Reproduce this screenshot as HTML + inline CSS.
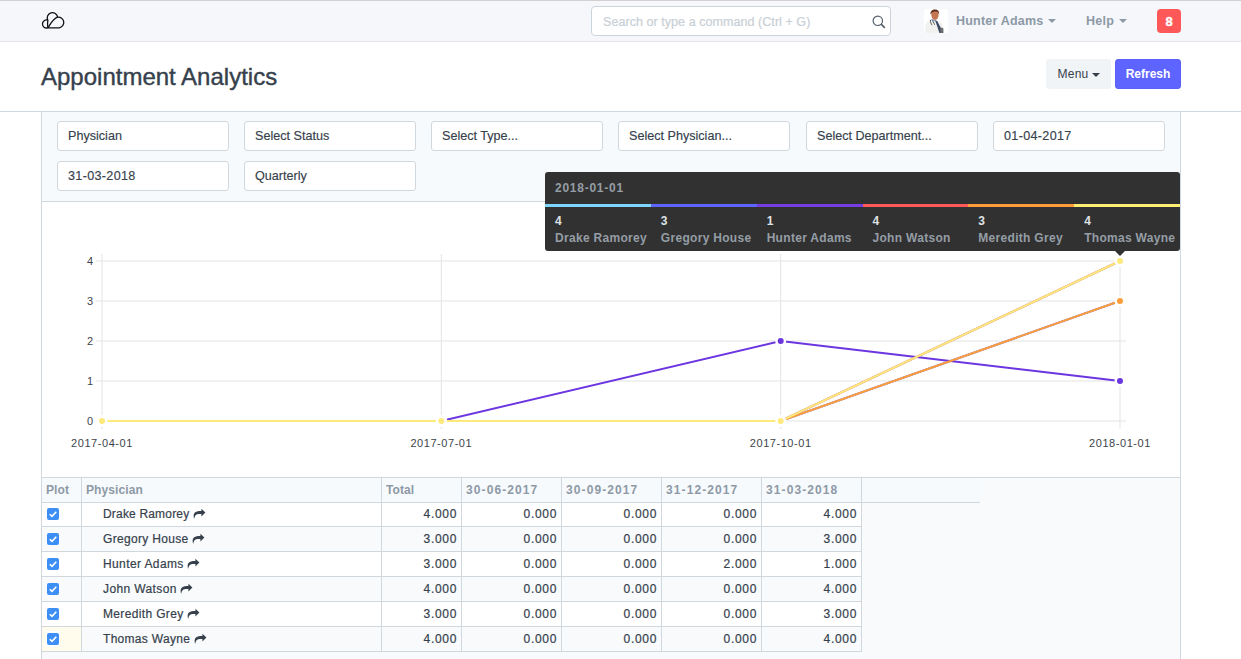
<!DOCTYPE html>
<html><head><meta charset="utf-8">
<style>
*{box-sizing:border-box;margin:0;padding:0}
html,body{width:1241px;height:659px;overflow:hidden;background:#fff;font-family:"Liberation Sans",sans-serif;color:#36414c;position:relative}
.abs{position:absolute}
.t{position:absolute;white-space:nowrap;line-height:1}
#nav{left:0;top:0;width:1241px;height:42px;background:#f5f7fa;border-top:1px solid #d1d1d1;border-bottom:1px solid #e1e5ea}
#search{left:591px;top:5px;width:300px;height:30px;background:#fff;border:1px solid #cdd5dc;border-radius:4px}
.navtxt{font-weight:bold;font-size:12.5px;color:#8d99a6}
.caret{position:absolute;width:0;height:0;border-left:4px solid transparent;border-right:4px solid transparent;border-top:4px solid #8d99a6}
#badge{left:1157px;top:9px;width:24px;height:24px;background:#ff5858;border-radius:4px;color:#fff;font-weight:bold;font-size:13px;text-align:center;line-height:25px;-webkit-text-stroke:0.4px #fff}
#head{left:0;top:42px;width:1241px;height:70px;background:#fff;border-bottom:1px solid #d1d8dd}
.btn{position:absolute;top:59px;height:30px;border-radius:3px;font-size:12px;line-height:30px;text-align:center}
#main{left:41px;top:112px;width:1140px;height:560px;border-left:1px solid #d1d8dd;border-right:1px solid #d1d8dd;background:#fff}
#form{left:42px;top:112px;width:1138px;height:90px;background:#f7fafc;border-bottom:1px solid #d1d8dd}
.inp{position:absolute;width:172px;height:30px;background:#fff;border:1px solid #d1d8dd;border-radius:3px;font-size:12.6px;padding-left:10px;line-height:28px;color:#36414c;-webkit-text-stroke:0.15px #36414c}
.dt{letter-spacing:0.32px}
#tablebg{left:42px;top:477px;width:1138px;height:190px;background:#f9fafc;border-top:1px solid #d1d8dd}
#tip{left:545px;top:172px;width:635px;height:79px;background:#313131;border-radius:3px;color:#959da5;font-weight:bold;font-size:12px;letter-spacing:0.3px}
.th{font-weight:bold;font-size:12px;color:#8d99a6;letter-spacing:0.1px}
.td{font-size:12px;color:#36414c;letter-spacing:0.18px;-webkit-text-stroke:0.2px #36414c}
.num{letter-spacing:0.7px}
.cb{position:absolute;width:12px;height:12px;background:#3d8ff5;border-radius:2px;line-height:0}
.share{vertical-align:-1.4px;margin-left:-0.3px}
</style></head><body>
<div id="nav" class="abs">
  <svg class="abs" style="left:38px;top:8px" width="30" height="24" viewBox="38 8 30 24">
    <g fill="none" stroke="#111" stroke-width="1.3" stroke-linejoin="round">
      <path d="M47.6 26.8 L59.2 26.8 A5.2 5.2 0 1 0 57.6 16.2 A5.2 5.2 0 1 0 47.8 19.2 A4 4 0 1 0 47.6 26.8 Z"/>
      <path d="M47.8 19.2 C47.4 22 47.5 24.8 47.9 26.8"/>
      <path d="M47.9 26.8 C50.5 22.8 53.2 17.6 57.6 16.2"/>
    </g>
  </svg>
  <div id="search" class="abs"><span class="t" style="left:11px;top:9px;font-size:12.5px;color:#c8cfd6;letter-spacing:0.06px;-webkit-text-stroke:0.2px #c8cfd6">Search or type a command (Ctrl + G)</span>
    <svg class="abs" style="left:280px;top:8px" width="14" height="15" viewBox="0 0 14 15"><circle cx="5.8" cy="5.8" r="4.7" fill="none" stroke="#56616c" stroke-width="1.2"/><path d="M9.2 9.2 L12.8 12.9" stroke="#56616c" stroke-width="1.7"/></svg>
  </div>
  <div class="abs" style="left:924px;top:8px;width:24px;height:24px;background:#fff;border-radius:3px;overflow:hidden">
    <svg width="24" height="24" viewBox="0 0 24 24">
      <path d="M1 25 L1.5 16 C2.5 12.5 5 11 7.5 10.2 L12 11 C15 12 17.5 13.5 18.8 16 L19.5 25 Z" fill="#f1f1ef"/>
      <path d="M7 10 L11.5 10.5 L12.5 12.5 L8 12 Z" fill="#8fa6c8"/>
      <path d="M11.2 11.5 L13.2 12 L18 21 L18.5 25 L15.8 25 Z" fill="#3f4a66"/>
      <path d="M16 18.5 L19.3 19 L19.5 25 L16.5 25 Z" fill="#6a6d70"/>
      <path d="M7.2 4.2 C7.2 8.5 8.8 10.8 11 10.8 C13.3 10.8 14.6 8.5 14.6 5 C14.6 2.5 13 1.5 11 1.5 C8.8 1.5 7.2 2.3 7.2 4.2 Z" fill="#c47650"/>
      <path d="M6.4 5.5 C6.2 2 8.2 0.4 11 0.4 C14 0.4 15.4 2.2 15.2 5.8 C14.8 4.5 14 3 13 2.6 C11 2.3 9 2.5 7.8 3.6 C7.2 4.2 6.9 5 6.4 5.5 Z" fill="#5b2c18"/>
      <path d="M6.5 10.8 C6.2 13 7.2 15 8 16.2 M8.5 11.5 C9.5 13.5 10.5 15 10.6 15.8" fill="none" stroke="#4a4a4a" stroke-width="0.9"/>
    </svg>
  </div>
  <span class="t navtxt" style="left:956px;top:14px;letter-spacing:0.2px">Hunter Adams</span>
  <div class="caret" style="left:1048px;top:18px"></div>
  <span class="t navtxt" style="left:1086px;top:14px;letter-spacing:0.3px">Help</span>
  <div class="caret" style="left:1119px;top:18px"></div>
  <div id="badge" class="abs" style="top:8px">8</div>
</div>

<div id="head" class="abs">
  <span class="t" style="left:41px;top:23px;font-size:24px;color:#36414c;-webkit-text-stroke:0.4px #36414c">Appointment Analytics</span>
</div>
<div class="btn" style="left:1046px;width:65px;background:#f0f4f7;color:#36414c"><span style="position:relative;left:-5.5px;letter-spacing:0.2px">Menu</span><div class="caret" style="left:46px;top:14px;border-top-color:#36414c"></div></div>
<div class="btn" style="left:1115px;width:66px;background:#5e64ff;color:#fff;font-weight:bold;border:1px solid #5a60f5;line-height:28px">Refresh</div>

<div id="main" class="abs"></div>
<div id="form" class="abs"></div>
<div class="inp" style="left:57px;top:121px">Physician</div>
<div class="inp" style="left:244px;top:121px">Select Status</div>
<div class="inp" style="left:431px;top:121px">Select Type...</div>
<div class="inp" style="left:618px;top:121px">Select Physician...</div>
<div class="inp" style="left:806px;top:121px">Select Department...</div>
<div class="inp dt" style="left:993px;top:121px">01-04-2017</div>
<div class="inp dt" style="left:57px;top:161px">31-03-2018</div>
<div class="inp" style="left:244px;top:161px">Quarterly</div>

<div id="tablebg" class="abs"></div>

<div id="tbl">
<div class="abs" style="left:42px;top:478px;width:938px;height:24px;background:#f7fafc"></div>
<div class="abs" style="left:42px;top:503px;width:819px;height:23px;background:#fff"></div>
<div class="abs" style="left:42px;top:527px;width:819px;height:24px;background:#f8fafc"></div>
<div class="abs" style="left:42px;top:552px;width:819px;height:24px;background:#fff"></div>
<div class="abs" style="left:42px;top:577px;width:819px;height:24px;background:#f8fafc"></div>
<div class="abs" style="left:42px;top:602px;width:819px;height:24px;background:#fff"></div>
<div class="abs" style="left:42px;top:627px;width:819px;height:24px;background:#f8fafc"></div>
<div class="abs" style="left:42px;top:627px;width:39px;height:24px;background:#fffcee"></div>
<div class="abs" style="left:46px;top:631px;width:14px;height:16px;background:#fff"></div>
<div class="abs" style="left:41px;top:502px;width:939px;height:1px;background:#d1d8dd"></div>
<div class="abs" style="left:41px;top:526px;width:820px;height:1px;background:#d1d8dd"></div>
<div class="abs" style="left:41px;top:551px;width:820px;height:1px;background:#d1d8dd"></div>
<div class="abs" style="left:41px;top:576px;width:820px;height:1px;background:#d1d8dd"></div>
<div class="abs" style="left:41px;top:601px;width:820px;height:1px;background:#d1d8dd"></div>
<div class="abs" style="left:41px;top:626px;width:820px;height:1px;background:#d1d8dd"></div>
<div class="abs" style="left:41px;top:651px;width:820px;height:1px;background:#d1d8dd"></div>
<div class="abs" style="left:81px;top:478px;width:1px;height:174px;background:#d1d8dd"></div>
<div class="abs" style="left:381px;top:478px;width:1px;height:174px;background:#d1d8dd"></div>
<div class="abs" style="left:461px;top:478px;width:1px;height:174px;background:#d1d8dd"></div>
<div class="abs" style="left:561px;top:478px;width:1px;height:174px;background:#d1d8dd"></div>
<div class="abs" style="left:661px;top:478px;width:1px;height:174px;background:#d1d8dd"></div>
<div class="abs" style="left:761px;top:478px;width:1px;height:174px;background:#d1d8dd"></div>
<div class="abs" style="left:861px;top:478px;width:1px;height:174px;background:#d1d8dd"></div>
<span class="t th" style="left:46px;top:484px">Plot</span>
<span class="t th" style="left:86px;top:484px">Physician</span>
<span class="t th" style="left:386px;top:484px">Total</span>
<span class="t th" style="left:466px;top:484px;letter-spacing:1.1px">30-06-2017</span>
<span class="t th" style="left:566px;top:484px;letter-spacing:1.1px">30-09-2017</span>
<span class="t th" style="left:666px;top:484px;letter-spacing:1.1px">31-12-2017</span>
<span class="t th" style="left:766px;top:484px;letter-spacing:1.1px">31-03-2018</span>
<div class="cb" style="left:47px;top:508px"><svg width="12" height="12" viewBox="0 0 12 12"><path d="M2.8 6.2 L5 8.4 L9.3 3.8" fill="none" stroke="#fff" stroke-width="1.6"/></svg></div>
<span class="t td" style="left:103px;top:508px;letter-spacing:0.18px">Drake Ramorey <svg class="share" width="13" height="11" viewBox="-0.5 -1 13 11"><path d="M11.9 3.6 L7.9 -0.3 L7.9 1.9 C4.5 1.9 1.8 2.4 0.6 4.6 C-0.1 6 0.1 8.3 0.6 10 C1.2 7.5 2 5.3 4.8 5.1 L7.9 5.1 L7.9 7.6 Z" fill="#36414c"/></svg></span>
<span class="t td num" style="right:783.9000000000001px;top:508px">4.000</span>
<span class="t td num" style="right:683.9px;top:508px">0.000</span>
<span class="t td num" style="right:583.9px;top:508px">0.000</span>
<span class="t td num" style="right:483.9px;top:508px">0.000</span>
<span class="t td num" style="right:383.9px;top:508px">4.000</span>
<div class="cb" style="left:47px;top:533px"><svg width="12" height="12" viewBox="0 0 12 12"><path d="M2.8 6.2 L5 8.4 L9.3 3.8" fill="none" stroke="#fff" stroke-width="1.6"/></svg></div>
<span class="t td" style="left:103px;top:533px;letter-spacing:0.32px">Gregory House <svg class="share" width="13" height="11" viewBox="-0.5 -1 13 11"><path d="M11.9 3.6 L7.9 -0.3 L7.9 1.9 C4.5 1.9 1.8 2.4 0.6 4.6 C-0.1 6 0.1 8.3 0.6 10 C1.2 7.5 2 5.3 4.8 5.1 L7.9 5.1 L7.9 7.6 Z" fill="#36414c"/></svg></span>
<span class="t td num" style="right:783.9000000000001px;top:533px">3.000</span>
<span class="t td num" style="right:683.9px;top:533px">0.000</span>
<span class="t td num" style="right:583.9px;top:533px">0.000</span>
<span class="t td num" style="right:483.9px;top:533px">0.000</span>
<span class="t td num" style="right:383.9px;top:533px">3.000</span>
<div class="cb" style="left:47px;top:558px"><svg width="12" height="12" viewBox="0 0 12 12"><path d="M2.8 6.2 L5 8.4 L9.3 3.8" fill="none" stroke="#fff" stroke-width="1.6"/></svg></div>
<span class="t td" style="left:103px;top:558px;letter-spacing:0.39px">Hunter Adams <svg class="share" width="13" height="11" viewBox="-0.5 -1 13 11"><path d="M11.9 3.6 L7.9 -0.3 L7.9 1.9 C4.5 1.9 1.8 2.4 0.6 4.6 C-0.1 6 0.1 8.3 0.6 10 C1.2 7.5 2 5.3 4.8 5.1 L7.9 5.1 L7.9 7.6 Z" fill="#36414c"/></svg></span>
<span class="t td num" style="right:783.9000000000001px;top:558px">3.000</span>
<span class="t td num" style="right:683.9px;top:558px">0.000</span>
<span class="t td num" style="right:583.9px;top:558px">0.000</span>
<span class="t td num" style="right:483.9px;top:558px">2.000</span>
<span class="t td num" style="right:383.9px;top:558px">1.000</span>
<div class="cb" style="left:47px;top:583px"><svg width="12" height="12" viewBox="0 0 12 12"><path d="M2.8 6.2 L5 8.4 L9.3 3.8" fill="none" stroke="#fff" stroke-width="1.6"/></svg></div>
<span class="t td" style="left:103px;top:583px;letter-spacing:0.38px">John Watson <svg class="share" width="13" height="11" viewBox="-0.5 -1 13 11"><path d="M11.9 3.6 L7.9 -0.3 L7.9 1.9 C4.5 1.9 1.8 2.4 0.6 4.6 C-0.1 6 0.1 8.3 0.6 10 C1.2 7.5 2 5.3 4.8 5.1 L7.9 5.1 L7.9 7.6 Z" fill="#36414c"/></svg></span>
<span class="t td num" style="right:783.9000000000001px;top:583px">4.000</span>
<span class="t td num" style="right:683.9px;top:583px">0.000</span>
<span class="t td num" style="right:583.9px;top:583px">0.000</span>
<span class="t td num" style="right:483.9px;top:583px">0.000</span>
<span class="t td num" style="right:383.9px;top:583px">4.000</span>
<div class="cb" style="left:47px;top:608px"><svg width="12" height="12" viewBox="0 0 12 12"><path d="M2.8 6.2 L5 8.4 L9.3 3.8" fill="none" stroke="#fff" stroke-width="1.6"/></svg></div>
<span class="t td" style="left:103px;top:608px;letter-spacing:0.35px">Meredith Grey <svg class="share" width="13" height="11" viewBox="-0.5 -1 13 11"><path d="M11.9 3.6 L7.9 -0.3 L7.9 1.9 C4.5 1.9 1.8 2.4 0.6 4.6 C-0.1 6 0.1 8.3 0.6 10 C1.2 7.5 2 5.3 4.8 5.1 L7.9 5.1 L7.9 7.6 Z" fill="#36414c"/></svg></span>
<span class="t td num" style="right:783.9000000000001px;top:608px">3.000</span>
<span class="t td num" style="right:683.9px;top:608px">0.000</span>
<span class="t td num" style="right:583.9px;top:608px">0.000</span>
<span class="t td num" style="right:483.9px;top:608px">0.000</span>
<span class="t td num" style="right:383.9px;top:608px">3.000</span>
<div class="cb" style="left:47px;top:633px"><svg width="12" height="12" viewBox="0 0 12 12"><path d="M2.8 6.2 L5 8.4 L9.3 3.8" fill="none" stroke="#fff" stroke-width="1.6"/></svg></div>
<span class="t td" style="left:103px;top:633px;letter-spacing:0.3px">Thomas Wayne <svg class="share" width="13" height="11" viewBox="-0.5 -1 13 11"><path d="M11.9 3.6 L7.9 -0.3 L7.9 1.9 C4.5 1.9 1.8 2.4 0.6 4.6 C-0.1 6 0.1 8.3 0.6 10 C1.2 7.5 2 5.3 4.8 5.1 L7.9 5.1 L7.9 7.6 Z" fill="#36414c"/></svg></span>
<span class="t td num" style="right:783.9000000000001px;top:633px">4.000</span>
<span class="t td num" style="right:683.9px;top:633px">0.000</span>
<span class="t td num" style="right:583.9px;top:633px">0.000</span>
<span class="t td num" style="right:483.9px;top:633px">0.000</span>
<span class="t td num" style="right:383.9px;top:633px">4.000</span>
</div>
<!-- chart -->
<svg class="abs" style="left:0;top:0" width="1241" height="659">
<line x1="96" y1="421" x2="1126" y2="421" stroke="#e3e3e3" stroke-width="1"/>
<line x1="96" y1="381" x2="1126" y2="381" stroke="#e3e3e3" stroke-width="1"/>
<line x1="96" y1="341" x2="1126" y2="341" stroke="#e3e3e3" stroke-width="1"/>
<line x1="96" y1="301" x2="1126" y2="301" stroke="#e3e3e3" stroke-width="1"/>
<line x1="96" y1="261" x2="1126" y2="261" stroke="#e3e3e3" stroke-width="1"/>
<line x1="102" y1="254" x2="102" y2="429" stroke="#e3e3e3" stroke-width="1"/>
<line x1="441.3" y1="254" x2="441.3" y2="429" stroke="#e3e3e3" stroke-width="1"/>
<line x1="780.7" y1="254" x2="780.7" y2="429" stroke="#e3e3e3" stroke-width="1"/>
<line x1="1120" y1="254" x2="1120" y2="429" stroke="#e3e3e3" stroke-width="1"/>
<text x="93" y="425" text-anchor="end" font-size="11" fill="#40454b">0</text>
<text x="93" y="385" text-anchor="end" font-size="11" fill="#40454b">1</text>
<text x="93" y="345" text-anchor="end" font-size="11" fill="#40454b">2</text>
<text x="93" y="305" text-anchor="end" font-size="11" fill="#40454b">3</text>
<text x="93" y="265" text-anchor="end" font-size="11" fill="#40454b">4</text>
<text x="102" y="447" text-anchor="middle" font-size="11" letter-spacing="0.55" fill="#40454b">2017-04-01</text>
<text x="441.3" y="447" text-anchor="middle" font-size="11" letter-spacing="0.55" fill="#40454b">2017-07-01</text>
<text x="780.7" y="447" text-anchor="middle" font-size="11" letter-spacing="0.55" fill="#40454b">2017-10-01</text>
<text x="1120" y="447" text-anchor="middle" font-size="11" letter-spacing="0.55" fill="#40454b">2018-01-01</text>
<polyline points="102,421 441.3,421 780.7,421 1120,261" fill="none" stroke="#7cd6fd" stroke-width="2"/>
<circle cx="102" cy="421" r="4.25" fill="#7cd6fd" stroke="#fff" stroke-width="2.5"/>
<circle cx="441.3" cy="421" r="4.25" fill="#7cd6fd" stroke="#fff" stroke-width="2.5"/>
<circle cx="780.7" cy="421" r="4.25" fill="#7cd6fd" stroke="#fff" stroke-width="2.5"/>
<circle cx="1120" cy="261" r="4.25" fill="#7cd6fd" stroke="#fff" stroke-width="2.5"/>
<polyline points="102,421 441.3,421 780.7,421 1120,301" fill="none" stroke="#5e64ff" stroke-width="2"/>
<circle cx="102" cy="421" r="4.25" fill="#5e64ff" stroke="#fff" stroke-width="2.5"/>
<circle cx="441.3" cy="421" r="4.25" fill="#5e64ff" stroke="#fff" stroke-width="2.5"/>
<circle cx="780.7" cy="421" r="4.25" fill="#5e64ff" stroke="#fff" stroke-width="2.5"/>
<circle cx="1120" cy="301" r="4.25" fill="#5e64ff" stroke="#fff" stroke-width="2.5"/>
<polyline points="102,421 441.3,421 780.7,341 1120,381" fill="none" stroke="#6b35e0" stroke-width="2"/>
<circle cx="102" cy="421" r="4.25" fill="#6b35e0" stroke="#fff" stroke-width="2.5"/>
<circle cx="441.3" cy="421" r="4.25" fill="#6b35e0" stroke="#fff" stroke-width="2.5"/>
<circle cx="780.7" cy="341" r="4.25" fill="#6b35e0" stroke="#fff" stroke-width="2.5"/>
<circle cx="1120" cy="381" r="4.25" fill="#6b35e0" stroke="#fff" stroke-width="2.5"/>
<polyline points="102,421 441.3,421 780.7,421 1120,261" fill="none" stroke="#ff5858" stroke-width="2"/>
<circle cx="102" cy="421" r="4.25" fill="#ff5858" stroke="#fff" stroke-width="2.5"/>
<circle cx="441.3" cy="421" r="4.25" fill="#ff5858" stroke="#fff" stroke-width="2.5"/>
<circle cx="780.7" cy="421" r="4.25" fill="#ff5858" stroke="#fff" stroke-width="2.5"/>
<circle cx="1120" cy="261" r="4.25" fill="#ff5858" stroke="#fff" stroke-width="2.5"/>
<polyline points="102,421 441.3,421 780.7,421 1120,301" fill="none" stroke="#fd9e3a" stroke-width="2"/>
<circle cx="102" cy="421" r="4.25" fill="#fd9e3a" stroke="#fff" stroke-width="2.5"/>
<circle cx="441.3" cy="421" r="4.25" fill="#fd9e3a" stroke="#fff" stroke-width="2.5"/>
<circle cx="780.7" cy="421" r="4.25" fill="#fd9e3a" stroke="#fff" stroke-width="2.5"/>
<circle cx="1120" cy="301" r="4.25" fill="#fd9e3a" stroke="#fff" stroke-width="2.5"/>
<polyline points="102,421 441.3,421 780.7,421 1120,261" fill="none" stroke="#fde97c" stroke-width="2"/>
<circle cx="102" cy="421" r="4.25" fill="#fde97c" stroke="#fff" stroke-width="2.5"/>
<circle cx="441.3" cy="421" r="4.25" fill="#fde97c" stroke="#fff" stroke-width="2.5"/>
<circle cx="780.7" cy="421" r="4.25" fill="#fde97c" stroke="#fff" stroke-width="2.5"/>
<circle cx="1120" cy="261" r="4.25" fill="#fde97c" stroke="#fff" stroke-width="2.5"/>

</svg>

<div id="tip" class="abs">
<span class="t" style="left:10px;top:10px;letter-spacing:0.75px">2018-01-01</span>
<div class="abs" style="left:0.00px;top:32px;width:106.33px;height:3px;background:#7cd6fd"></div>
<span class="t" style="left:10.00px;top:43px;color:#dfe2e5">4</span>
<span class="t" style="left:10.00px;top:60px">Drake Ramorey</span>
<div class="abs" style="left:105.83px;top:32px;width:106.33px;height:3px;background:#5e64ff"></div>
<span class="t" style="left:115.83px;top:43px;color:#dfe2e5">3</span>
<span class="t" style="left:115.83px;top:60px">Gregory House</span>
<div class="abs" style="left:211.67px;top:32px;width:106.33px;height:3px;background:#743ee2"></div>
<span class="t" style="left:221.67px;top:43px;color:#dfe2e5">1</span>
<span class="t" style="left:221.67px;top:60px">Hunter Adams</span>
<div class="abs" style="left:317.50px;top:32px;width:106.33px;height:3px;background:#ff5858"></div>
<span class="t" style="left:327.50px;top:43px;color:#dfe2e5">4</span>
<span class="t" style="left:327.50px;top:60px">John Watson</span>
<div class="abs" style="left:423.33px;top:32px;width:106.33px;height:3px;background:#fd9e3a"></div>
<span class="t" style="left:433.33px;top:43px;color:#dfe2e5">3</span>
<span class="t" style="left:433.33px;top:60px">Meredith Grey</span>
<div class="abs" style="left:529.17px;top:32px;width:106.33px;height:3px;background:#feef72"></div>
<span class="t" style="left:539.17px;top:43px;color:#dfe2e5">4</span>
<span class="t" style="left:539.17px;top:60px">Thomas Wayne</span>
<div class="abs" style="left:570px;top:79px;width:0;height:0;border-left:5px solid transparent;border-right:5px solid transparent;border-top:5px solid #313131"></div>
</div>
</body></html>
